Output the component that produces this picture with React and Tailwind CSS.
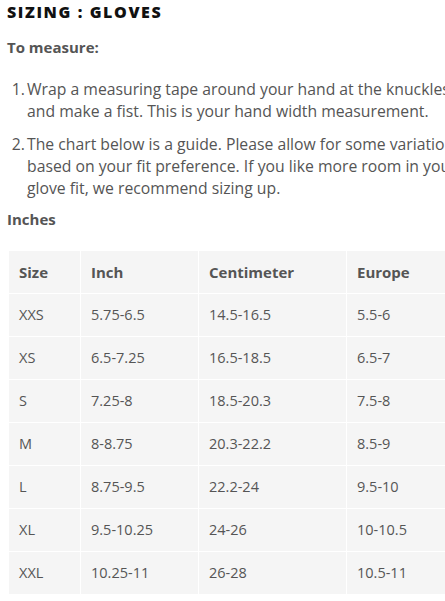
const rows = [
  ["XXS", "5.75-6.5", "14.5-16.5", "5.5-6"],
  ["XS", "6.5-7.25", "16.5-18.5", "6.5-7"],
  ["S", "7.25-8", "18.5-20.3", "7.5-8"],
  ["M", "8-8.75", "20.3-22.2", "8.5-9"],
  ["L", "8.75-9.5", "22.2-24", "9.5-10"],
  ["XL", "9.5-10.25", "24-26", "10-10.5"],
  ["XXL", "10.25-11", "26-28", "10.5-11"],
];

const cols = ["w-[72px]", "w-[118px]", "w-[148px]", "w-[140px]"];

export default function App() {
  return (
    <div
      className="w-[445px] h-[601px] overflow-hidden bg-white text-[#555]"
      style={{ fontFamily: '"Open Sans", sans-serif' }}
    >
      <div className="w-[500px] pl-[7px] pt-[2px]">
        <h2 className="text-[16px] font-extrabold tracking-[1.6px] text-[#111] leading-[20px]">
          SIZING : GLOVES
        </h2>
        <p className="mt-[15px] text-[15px] font-bold leading-[20px]">To measure:</p>

        <ol className="mt-[21px] text-[15.75px] leading-[22px] whitespace-nowrap">
          <li className="flex">
            <span className="w-[18px] mr-[2px] text-right">1.</span>
            <span>
              Wrap a measuring tape around your hand at the knuckles
              <br />
              and make a fist. This is your hand width measurement.
            </span>
          </li>
          <li className="flex mt-[11px]">
            <span className="w-[18px] mr-[2px] text-right">2.</span>
            <span>
              The chart below is a guide. Please allow for some variation
              <br />
              based on your fit preference. If you like more room in your
              <br />
              glove fit, we recommend sizing up.
            </span>
          </li>
        </ol>

        <p className="mt-[10px] text-[15px] font-bold leading-[20px]">Inches</p>

        <table className="mt-[21px] ml-[1px] border-collapse">
          <thead>
            <tr className="h-[43px]">
              {["Size", "Inch", "Centimeter", "Europe"].map((h, i) => (
                <th
                  key={h}
                  className={`${cols[i]} bg-[#f5f5f5] border border-white text-left text-[15px] font-bold pl-[10px] align-middle`}
                >
                  {h}
                </th>
              ))}
            </tr>
          </thead>
          <tbody>
            {rows.map((r) => (
              <tr key={r[0]} className="h-[43px]">
                {r.map((c, i) => (
                  <td
                    key={i}
                    className={`${cols[i]} bg-[#f5f5f5] border border-white text-[14.5px] pl-[10px] align-middle`}
                  >
                    {c}
                  </td>
                ))}
              </tr>
            ))}
          </tbody>
        </table>
      </div>
    </div>
  );
}
